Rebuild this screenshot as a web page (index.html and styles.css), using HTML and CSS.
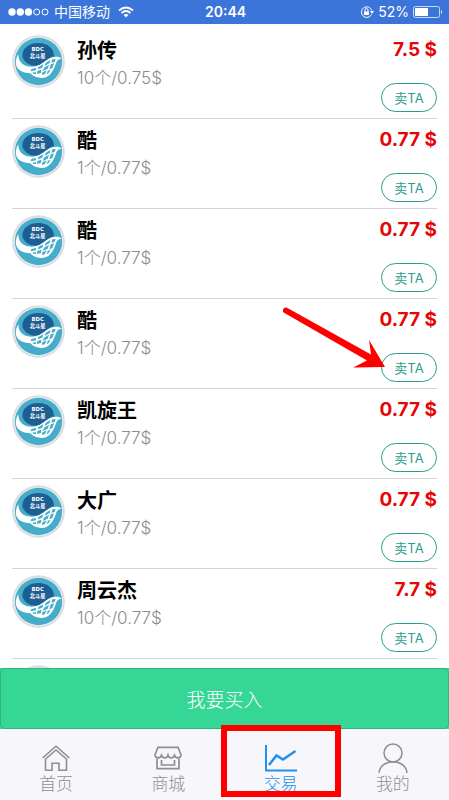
FILE: index.html
```
<!DOCTYPE html>
<html lang="zh-CN">
<head>
<meta charset="utf-8">
<meta name="viewport" content="width=device-width, initial-scale=1">
<title>交易</title>
<link rel="stylesheet" href="styles.css">
</head>
<body>
<div class="app">
  <header class="status">
    <div class="carrier">
      <svg width="42" height="10" viewBox="0 0 42 10" aria-hidden="true"><g fill="#fff"><circle cx="4" cy="5" r="3.700"/><circle cx="12.300" cy="5" r="3.700"/><circle cx="20.500" cy="5" r="3.700"/></g><g fill="none" stroke="#fff"><circle cx="28.700" cy="5" r="3"/><circle cx="37" cy="5" r="3"/></g></svg>
      <span>中国移动</span>
      <svg class="wifi" width="16" height="12" viewBox="0 0 16 12" aria-hidden="true"><path d="M1 4.500Q8-1.500 15 4.500M3.500 7Q8 3 12.500 7" fill="none" stroke="#fff" stroke-width="1.800"/><path d="M5.500 8.800Q8 7 10.500 8.800L8 11.500Z" fill="#fff"/></svg>
    </div>
    <time class="clock">20:44</time>
    <div class="power">
      <svg width="14" height="14" viewBox="0 0 14 14" aria-hidden="true"><path d="M11.500 9.500A5.300 5.300 0 1 1 11.800 5.500" fill="none" stroke="#fff"/><path d="M10 6h4l-2 3z" fill="#fff"/><path d="M4 6.500h5v3.500H4z" fill="#fff"/><path d="M5 7V5a1.500 1.500 0 0 1 3 0v2" fill="none" stroke="#fff"/></svg>
      <span>52%</span>
      <svg width="30" height="12" viewBox="0 0 30 12" aria-hidden="true"><rect x=".5" y=".5" width="26" height="11" rx="2" fill="none" stroke="#c9dafa"/><path d="M2 2h13v8H2z" fill="#fff"/><path d="M28 4q2 2 0 4z" fill="#fff"/></svg>
    </div>
  </header>
  <main class="list">
    <article class="offer">
      <svg class="avatar" viewBox="0 0 159 159" aria-hidden="true">
        <g id="logo" transform="translate(-36 -30)">
          <circle cx="115.500" cy="109.500" r="79" fill="#dcdbe0"/>
          <circle cx="115.500" cy="109.500" r="73" fill="#eef5f8"/>
          <circle cx="115.500" cy="109.500" r="71" fill="#45adc9"/>
          <path d="M67 94C67 68 88 54 115 54C143 54 162 70 162 94C143 95 135 120 111 122C88 124 72 111 67 94Z" fill="#1d5e93"/>
          <path d="M55 88C45 103 44 124 58 135C68 143 80 143 91 145C102 158 125 162 139 156C158 147 164 127 169 112C173 103 179 101 185 101C175 91 154 94 139 106C122 120 104 129 83 124C66 120 55 108 55 88Z" fill="#fff"/>
          <g fill="#45adc9">
            <path d="M137 114L151 105L149 114L134 123Z"/>
            <path d="M157 103L167 102L164 111L154 113Z"/>
            <path d="M115 126L130 118L127 128L113 133Z"/>
            <path d="M132 128L147 119L143 131L128 138Z"/>
            <path d="M152 118L162 115L157 129L148 133Z"/>
            <path d="M94 132L108 129L108 136L92 139Z"/>
            <path d="M112 138L124 134L123 144L111 147Z"/>
            <path d="M127 142L140 136L134 148L126 150Z"/>
            <path d="M144 137L152 134L146 144L139 148Z"/>
            <path d="M97 143L107 141L108 147L101 147Z"/>
          </g>
          <text class="logo-latin" x="113" y="77">BDC</text>
          <text class="logo-name" x="113" y="100">北斗星</text>
        </g>
      </svg>
      <div class="info"><h2>孙传</h2><p>10个/0.75$</p></div><div class="deal"><strong>7.5 $</strong><button type="button" class="sell">卖TA</button></div>
    </article>
    <article class="offer"><svg class="avatar" viewBox="0 0 159 159" aria-hidden="true"><use href="#logo"/></svg><div class="info"><h2>酷</h2><p>1个/0.77$</p></div><div class="deal"><strong>0.77 $</strong><button type="button" class="sell">卖TA</button></div></article>
    <article class="offer"><svg class="avatar" viewBox="0 0 159 159" aria-hidden="true"><use href="#logo"/></svg><div class="info"><h2>酷</h2><p>1个/0.77$</p></div><div class="deal"><strong>0.77 $</strong><button type="button" class="sell">卖TA</button></div></article>
    <article class="offer"><svg class="avatar" viewBox="0 0 159 159" aria-hidden="true"><use href="#logo"/></svg><div class="info"><h2>酷</h2><p>1个/0.77$</p></div><div class="deal"><strong>0.77 $</strong><button type="button" class="sell">卖TA</button></div>
      <svg class="arrow" width="104" height="64" viewBox="0 0 104 64" aria-hidden="true"><path d="M4 1.800A2.800 2.800 0 0 0 1.500 7L84 54.500L70 61.500L102 61L86 34L88 48.500Z" fill="#f00"/></svg>
    </article>
    <article class="offer"><svg class="avatar" viewBox="0 0 159 159" aria-hidden="true"><use href="#logo"/></svg><div class="info"><h2>凯旋王</h2><p>1个/0.77$</p></div><div class="deal"><strong>0.77 $</strong><button type="button" class="sell">卖TA</button></div></article>
    <article class="offer"><svg class="avatar" viewBox="0 0 159 159" aria-hidden="true"><use href="#logo"/></svg><div class="info"><h2>大广</h2><p>1个/0.77$</p></div><div class="deal"><strong>0.77 $</strong><button type="button" class="sell">卖TA</button></div></article>
    <article class="offer"><svg class="avatar" viewBox="0 0 159 159" aria-hidden="true"><use href="#logo"/></svg><div class="info"><h2>周云杰</h2><p>10个/0.77$</p></div><div class="deal"><strong>7.7 $</strong><button type="button" class="sell">卖TA</button></div></article>
    <div class="offer"><svg class="avatar" viewBox="0 0 159 159" aria-hidden="true"><use href="#logo"/></svg></div>
  </main>
  <div class="buy-bar"><button type="button" class="buy">我要买入</button></div>
  <nav class="tabs">
    <a href="#home" class="tab"><svg width="32" height="30" viewBox="0 0 32 30" aria-hidden="true"><g fill="none" stroke="#8e8e93" stroke-width="1.600"><path d="M2.500 15L16 3.200L29.500 15"/><path d="M5 16.500L16 7L27 16.500M5.500 16v11.200h6.500v-7h7v7h7.500V16"/></g></svg><span>首页</span></a>
    <a href="#mall" class="tab"><svg width="32" height="30" viewBox="0 0 32 30" aria-hidden="true"><g fill="none" stroke="#8e8e93" stroke-width="1.700"><path d="M6 4.300h20l3 7.500c0 4-5 4-6.500 0.500c-1 3.500-5.500 3.500-6.500 0c-1 3.500-5.500 3.500-6.500 0c-1.500 3.500-6.500 3.500-6.500-.5z"/><path d="M5 15.500v10.200h22V15.500M9.500 17v5h13V17"/></g></svg><span>商城</span></a>
    <a href="#trade" class="tab active" aria-current="page"><svg width="32" height="30" viewBox="0 0 32 30" aria-hidden="true"><g fill="none" stroke="#2390ec" stroke-width="2"><path d="M1 2v25.500h31"/><path d="M4 22L11.500 12.500L18 16.500L30.500 8" stroke-width="2.500"/></g></svg><span>交易</span></a>
    <a href="#me" class="tab"><svg width="32" height="30" viewBox="0 0 32 30" aria-hidden="true"><g fill="none" stroke="#8e8e93" stroke-width="1.500"><circle cx="16" cy="10" r="9"/><path d="M2 30c1-15 27-15 28 0"/></g></svg><span>我的</span></a>
  </nav>
</div>
</body>
</html>
```
FILE: styles.css
```
* { box-sizing: border-box; }

body {
  margin: 0;
  background: #fff;
  color: #000;
  font-family: Inter, "Noto Sans CJK SC", sans-serif;
}

button { font-family: inherit; }

.app {
  display: flex;
  flex-direction: column;
  height: 100vh;
}

.status {
  display: grid;
  grid-template-columns: 1fr auto 1fr;
  align-items: center;
  flex: none;
  height: 24px;
  padding: 0 6px 0 8px;
  background: #3c75d9;
  color: #fff;
  font-size: 14px;
  line-height: 24px;
}

.carrier, .power { display: flex; align-items: center; gap: 4px; }
.power { justify-content: flex-end; }
.wifi { margin-left: 4px; }
.clock { font-weight: 600; }

.list {
  flex: 1;
  min-height: 0;
  overflow: hidden;
  padding: 5px 12px 0;
}

.offer {
  position: relative;
  display: flex;
  gap: 12px;
  height: 90px;
  padding-top: 6px;
  border-bottom: 1px solid #d4d4d4;
}

.avatar { flex: none; width: 53px; height: 53px; }

.logo-latin, .logo-name {
  fill: #fff;
  font-size: 16px;
  font-weight: 700;
  text-anchor: middle;
}
.logo-latin { font-family: "DejaVu Sans", sans-serif; }

.info { flex: 1; }

.info h2 {
  margin: 0;
  font-size: 20px;
  font-weight: 700;
  line-height: 32px;
}

.info p {
  margin: 0;
  color: #8c8c8c;
  font-size: 17px;
  font-weight: 300;
  line-height: 22px;
}

.deal {
  display: flex;
  flex-direction: column;
  align-items: flex-end;
  justify-content: space-between;
  padding-bottom: 6px;
}

.deal strong {
  color: #e60505;
  font-size: 19px;
  font-weight: 700;
  line-height: 30px;
}

.sell {
  width: 56px;
  height: 29px;
  padding: 0;
  border: 1px solid #2a9d8f;
  border-radius: 15px;
  background: #fff;
  color: #2a9d8f;
  font-size: 13px;
}

.arrow {
  position: absolute;
  right: 50px;
  bottom: 18px;
}

.buy-bar {
  display: flex;
  flex: none;
  background: #36d697;
}

.buy {
  flex: 1;
  height: 61px;
  border: 1px solid #2eb580;
  border-radius: 5px;
  background: #36d697;
  color: #fff;
  font-size: 19px;
  font-weight: 300;
}

.tabs {
  display: grid;
  grid-template-columns: repeat(4, 1fr);
  flex: none;
  height: 71px;
  background: #f7f7fb;
}

.tab {
  position: relative;
  display: flex;
  flex-direction: column;
  align-items: center;
  padding-top: 14px;
  color: #8e8e93;
  font-size: 17px;
  font-weight: 300;
  line-height: 22px;
  text-decoration: none;
}

.tab.active { color: #2390ec; }

.tab.active::after {
  content: "";
  position: absolute;
  inset: -4px -4px 3px;
  border: 6px solid #f00;
}
```
